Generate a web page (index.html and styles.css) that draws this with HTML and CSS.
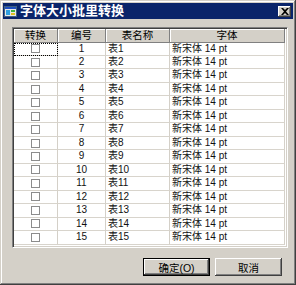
FILE: index.html
```html
<!DOCTYPE html>
<html lang="zh-CN">

<head>
    <meta charset="UTF-8">
    <title>字体大小批里转换</title>
    <link rel="stylesheet" href="styles.css">
</head>

<body>
    <div class="window">
        <div class="titlebar">
            <svg class="app-icon" width="14" height="13" viewBox="0 0 14 13">
                <rect x="0.5" y="1.5" width="12" height="10" fill="#e8e8e8" stroke="#406080"/>
                <rect x="1" y="2" width="11" height="2" fill="#2050c0"/>
                <rect x="2" y="5" width="4" height="5" fill="#30a0e0"/>
                <rect x="7" y="5" width="4" height="2" fill="#40b040"/>
                <rect x="7" y="8" width="4" height="2" fill="#e0c020"/>
            </svg>
            <span class="title">字体大小批里转换</span>
            <div class="close-btn">
                <svg width="8" height="7" viewBox="0 0 8 7">
                    <path d="M0 0 L2 0 L4 2 L6 0 L8 0 L5 3.5 L8 7 L6 7 L4 5 L2 7 L0 7 L3 3.5 Z" fill="#000"/>
                </svg>
            </div>
        </div>

        <div class="content">
            <div class="grid">
                <div class="grid-head">
                    <div class="hcell">转换</div>
                    <div class="hcell">编号</div>
                    <div class="hcell">表名称</div>
                    <div class="hcell">字体</div>
                </div>
                <div id="rows"></div>
            </div>

            <div class="buttons">
                <button class="btn default">确定(<u>O</u>)</button>
                <button class="btn">取消</button>
            </div>
        </div>
    </div>

    <script>
        // 生成15行表格数据
        const rows = document.getElementById('rows');
        for (let i = 1; i <= 15; i++) {
            const row = document.createElement('div');
            row.className = 'grid-row';
            row.innerHTML =
                '<div class="cell check' + (i === 1 ? ' focus' : '') + '"><span class="box"></span></div>' +
                '<div class="cell num">' + i + '</div>' +
                '<div class="cell">表' + i + '</div>' +
                '<div class="cell">新宋体 14 pt</div>';
            rows.appendChild(row);
        }
    </script>
</body>

</html>
```

FILE: styles.css
```css
body {
    margin: 0;
    background-color: #d4d0c8;
    font-family: "Liberation Sans", "Noto Sans CJK SC", sans-serif;
}

.window {
    width: 296px;
    height: 285px;
    box-sizing: border-box;
    padding: 3px;
    background-color: #d4d0c8;
    box-shadow: inset -1px -1px #404040, inset 1px 1px #d4d0c8,
        inset -2px -2px #808080, inset 2px 2px #fff;
}

.titlebar {
    height: 16px;
    background-color: #0a246a;
    display: flex;
    align-items: center;
    padding: 0 2px 0 1px;
}

.app-icon {
    margin-right: 2px;
}

.title {
    color: #fff;
    font-weight: bold;
    font-size: 13px;
    line-height: 16px;
}

.close-btn {
    margin-left: auto;
    width: 13px;
    height: 11px;
    box-sizing: border-box;
    background-color: #d4d0c8;
    display: flex;
    align-items: center;
    justify-content: center;
    box-shadow: inset -1px -1px #404040, inset 1px 1px #fff,
        inset -2px -2px #808080;
}

.content {
    padding: 8px 5px 0 9px;
}

.grid {
    width: 276px;
    height: 221px;
    box-sizing: border-box;
    background-color: #fff;
    border-top: 1px solid #808080;
    border-left: 1px solid #808080;
    border-right: 1px solid #fff;
    border-bottom: 1px solid #fff;
    box-shadow: inset 1px 1px #404040, inset -1px -1px #d4d0c8;
    padding: 1px;
    font-size: 10px;
}

.grid-head,
.grid-row {
    display: grid;
    grid-template-columns: 44px 48px 64px 115px;
}

.grid-head {
    height: 13.5px;
}

.hcell {
    background-color: #d4d0c8;
    border-right: 1px solid #808080;
    border-bottom: 1px solid #808080;
    box-shadow: inset 1px 1px #fff;
    text-align: center;
    font-size: 10.5px;
    line-height: 12.5px;
    color: #000;
}

.grid-row {
    height: 13.47px;
}

.cell {
    border-right: 1px solid #d4d0c8;
    border-bottom: 1px solid #d8d4cc;
    padding-left: 2px;
    line-height: 12.5px;
    white-space: nowrap;
    overflow: hidden;
    color: #111;
}

.cell.num {
    text-align: center;
    padding-left: 0;
}

.cell.check {
    display: flex;
    align-items: center;
    justify-content: center;
    padding-left: 0;
}

.cell.focus {
    outline: 1px dotted #000;
    outline-offset: -1px;
}

.box {
    width: 7px;
    height: 7px;
    border: 1px solid #8c8c8c;
    background-color: #fff;
}

.buttons {
    display: flex;
    justify-content: flex-end;
    gap: 5px;
    margin-top: 10px;
    padding-right: 6px;
}

.btn {
    width: 67px;
    height: 18px;
    padding: 0;
    font-family: "Liberation Sans", "Noto Sans CJK SC", sans-serif;
    font-size: 10.5px;
    color: #000;
    background-color: #d4d0c8;
    border: none;
    box-shadow: inset -1px -1px #404040, inset 1px 1px #fff,
        inset -2px -2px #808080;
}

.btn.default {
    border: 1px solid #000;
}

.btn u {
    text-decoration: none;
}
```
